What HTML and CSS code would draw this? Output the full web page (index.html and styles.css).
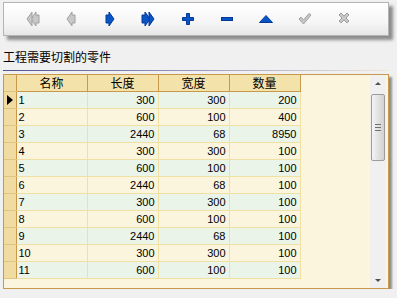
FILE: index.html
```
<!DOCTYPE html>
<html lang="zh">
<head>
    <meta charset="UTF-8">
    <title>零件</title>
    <link rel="stylesheet" href="styles.css">
</head>
<body>

    <div class="toolbar">
        <span class="tool">
            <svg width="16" height="16" viewBox="0 0 16 16"><polygon class="off" points="15,4 12,4 12,1 7,8 12,15 12,12 15,12"/><polygon class="off" points="8,1 3,8 8,15"/></svg>
        </span>
        <span class="tool">
            <svg width="16" height="16" viewBox="0 0 16 16"><polygon class="off" points="12,4 9,4 9,1 4,8 9,15 9,12 12,12"/></svg>
        </span>
        <span class="tool">
            <svg width="16" height="16" viewBox="0 0 16 16"><polygon class="on" points="4,4 7,4 7,1 12,8 7,15 7,12 4,12"/></svg>
        </span>
        <span class="tool">
            <svg width="16" height="16" viewBox="0 0 16 16"><polygon class="on" points="1,4 4,4 4,1 9,8 4,15 4,12 1,12"/><polygon class="on" points="8,1 13,8 8,15"/></svg>
        </span>
        <span class="tool">
            <svg width="16" height="16" viewBox="0 0 16 16"><polygon class="on" points="6.5,2.5 9.5,2.5 9.5,6.5 13.5,6.5 13.5,9.5 9.5,9.5 9.5,13.5 6.5,13.5 6.5,9.5 2.5,9.5 2.5,6.5 6.5,6.5"/></svg>
        </span>
        <span class="tool">
            <svg width="16" height="16" viewBox="0 0 16 16"><rect class="on" x="2.5" y="6.5" width="11" height="3"/></svg>
        </span>
        <span class="tool">
            <svg width="16" height="16" viewBox="0 0 16 16"><polygon class="on" points="8,4.5 14.5,11.5 1.5,11.5"/></svg>
        </span>
        <span class="tool">
            <svg width="16" height="16" viewBox="0 0 16 16"><polygon class="off" points="2,8 4,6 6.5,9 12,2.5 14,4 6.5,13"/></svg>
        </span>
        <span class="tool">
            <svg width="16" height="16" viewBox="0 0 16 16"><polygon class="off" points="3,4 5,2 8,5 11,2 13,4 10,7 13,10 11,12 8,9 5,12 3,10 6,7"/></svg>
        </span>
    </div>

    <div class="title">工程需要切割的零件</div>
    <div class="rule"></div>

    <div class="grid">
        <div class="grid-body">
            <table class="parts">
                <colgroup>
                    <col class="c-ind"><col class="c-col"><col class="c-col"><col class="c-col"><col class="c-col">
                </colgroup>
                <thead>
                    <tr><th class="ind"></th><th>名称</th><th>长度</th><th>宽度</th><th>数量</th></tr>
                </thead>
                <tbody>
                    <tr><td class="ind"><span class="cur"></span></td><td class="txt">1</td><td>300</td><td>300</td><td>200</td></tr>
                    <tr><td class="ind"></td><td class="txt">2</td><td>600</td><td>100</td><td>400</td></tr>
                    <tr><td class="ind"></td><td class="txt">3</td><td>2440</td><td>68</td><td>8950</td></tr>
                    <tr><td class="ind"></td><td class="txt">4</td><td>300</td><td>300</td><td>100</td></tr>
                    <tr><td class="ind"></td><td class="txt">5</td><td>600</td><td>100</td><td>100</td></tr>
                    <tr><td class="ind"></td><td class="txt">6</td><td>2440</td><td>68</td><td>100</td></tr>
                    <tr><td class="ind"></td><td class="txt">7</td><td>300</td><td>300</td><td>100</td></tr>
                    <tr><td class="ind"></td><td class="txt">8</td><td>600</td><td>100</td><td>100</td></tr>
                    <tr><td class="ind"></td><td class="txt">9</td><td>2440</td><td>68</td><td>100</td></tr>
                    <tr><td class="ind"></td><td class="txt">10</td><td>300</td><td>300</td><td>100</td></tr>
                    <tr><td class="ind"></td><td class="txt">11</td><td>600</td><td>100</td><td>100</td></tr>
                </tbody>
            </table>
        </div>
        <div class="scrollbar">
            <div class="arrow up"></div>
            <div class="track">
                <div class="thumb"><span class="grip"></span></div>
            </div>
            <div class="arrow down"></div>
        </div>
    </div>

</body>
</html>
```

FILE: styles.css
```
body {
    margin: 0;
    padding: 2px 0 0 3px;
    background: #f0f0f0;
    font-family: "Liberation Sans", "Noto Sans CJK SC", sans-serif;
    font-size: 11px;
    color: #000;
}

.toolbar {
    height: 32px;
    width: 364px;
    display: flex;
    align-items: center;
    padding-left: 20px;
    border: 1px solid #b4b4b4;
    background: linear-gradient(#ffffff, #f6f6f6 60%, #e6e6e6);
    box-shadow: 4px 4px 3px #8c8c8c;
}

.tool {
    width: 39px;
    height: 16px;
    flex: none;
    display: flex;
}

.tool svg .on {
    fill: #0a55c6;
    stroke: #03399a;
    stroke-width: 1;
}

.tool svg .off {
    fill: #c8c8c8;
    stroke: #a0a0a0;
    stroke-width: 1;
}

.title {
    margin-top: 12px;
    height: 17px;
    line-height: 17px;
    font-family: "Noto Sans CJK SC", sans-serif;
    font-size: 12px;
}

.rule {
    margin-top: 5px;
    width: 386px;
    height: 1px;
    background: linear-gradient(to right, #55558f, #9a9ac0 50%, #f0e8d8);
}

.grid {
    margin-top: 3px;
    width: 384px;
    height: 213px;
    display: flex;
    border: 1px solid #c8994c;
    background: #fbf5de;
    box-shadow: 3px 3px 2px #8f8f8f;
}

.grid-body {
    flex: 1;
    overflow: hidden;
}

.parts {
    border-collapse: collapse;
    table-layout: fixed;
    width: 296px;
}

.c-ind { width: 12px; }
.c-col { width: 71px; }

.parts th {
    height: 16px;
    padding: 0;
    background: #f3e3ab;
    border-right: 1px solid #c8994c;
    border-bottom: 1px solid #c8994c;
    font-family: "Noto Sans CJK SC", sans-serif;
    font-size: 12px;
    font-weight: normal;
    text-align: center;
    line-height: 16px;
}

.parts td {
    height: 16px;
    padding: 0 3px 0 2px;
    border-right: 1px solid #f0e0a4;
    border-bottom: 1px solid #f0e0a4;
    text-align: right;
    line-height: 16px;
    white-space: nowrap;
}

.parts tbody tr:nth-child(odd) td { background: #eaf4e8; }
.parts tbody tr:nth-child(even) td { background: #fbf5de; }

.parts td.txt { text-align: left; }

.parts .ind,
.parts tbody tr td.ind {
    padding: 0;
    background: #f0dca0;
    border-right: 1px solid #c8994c;
    border-bottom: 1px solid #e0c480;
    position: relative;
}

.cur {
    position: absolute;
    left: 3px;
    top: 3px;
    border-left: 6px solid #000;
    border-top: 5px solid transparent;
    border-bottom: 5px solid transparent;
}

.scrollbar {
    width: 16px;
    margin: 0 2px 0 0;
    display: flex;
    flex-direction: column;
    background: #f0f0f0;
}

.arrow {
    height: 16px;
    display: flex;
    justify-content: center;
    align-items: center;
}

.arrow.up::after {
    content: "";
    border-bottom: 3px solid #505050;
    border-left: 3px solid transparent;
    border-right: 3px solid transparent;
}

.arrow.down::after {
    content: "";
    border-top: 3px solid #505050;
    border-left: 3px solid transparent;
    border-right: 3px solid transparent;
}

.track {
    flex: 1;
    padding-top: 3px;
}

.thumb {
    height: 65px;
    margin: 0 1px;
    border: 1px solid #9c9c9c;
    border-radius: 2px;
    background: linear-gradient(to right, #f4f4f4, #e2e2e2 50%, #d2d2d2);
    display: flex;
    justify-content: center;
    align-items: center;
}

.grip {
    width: 6px;
    height: 5px;
    border-top: 1px solid #707070;
    border-bottom: 1px solid #707070;
    background: linear-gradient(transparent 2px, #707070 2px, #707070 3px, transparent 3px);
}
```
